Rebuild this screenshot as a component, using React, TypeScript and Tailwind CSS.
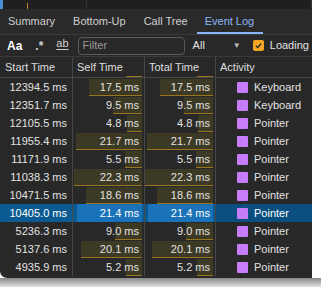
import React from 'react';

type Row = { start: string; self: number; total: number; activity: string; selected?: boolean };

const rows: Row[] = [
  { start: '12394.5', self: 17.5, total: 17.5, activity: 'Keyboard' },
  { start: '12351.7', self: 9.5, total: 9.5, activity: 'Keyboard' },
  { start: '12105.5', self: 4.8, total: 4.8, activity: 'Pointer' },
  { start: '11955.4', self: 21.7, total: 21.7, activity: 'Pointer' },
  { start: '11171.9', self: 5.5, total: 5.5, activity: 'Pointer' },
  { start: '11038.3', self: 22.3, total: 22.3, activity: 'Pointer' },
  { start: '10471.5', self: 18.6, total: 18.6, activity: 'Pointer' },
  { start: '10405.0', self: 21.4, total: 21.4, activity: 'Pointer', selected: true },
  { start: '5236.3', self: 9.0, total: 9.0, activity: 'Pointer' },
  { start: '5137.6', self: 20.1, total: 20.1, activity: 'Pointer' },
  { start: '4935.9', self: 5.2, total: 5.2, activity: 'Pointer' },
];

const PX_PER_MS = 3.03;

const BarCell: React.FC<{ value: number; selected?: boolean }> = ({ value, selected }) => (
  <div className="relative flex items-center justify-end pr-[5px] border-r border-[#474747]">
    <div
      className={
        selected
          ? 'absolute right-[2px] top-0 bottom-0 bg-[#1a72b8]'
          : 'absolute right-[2px] top-[1px] bottom-0 bg-[#3c3925] border-b border-[#9b7420]'
      }
      style={{ width: `${value * PX_PER_MS}px` }}
    />
    <span className="relative">{value.toFixed(1)} ms</span>
  </div>
);

export default function App() {
  return (
    <div className="w-[321px] h-[287px] bg-white overflow-hidden" style={{ fontFamily: '"Liberation Sans", Arial, sans-serif' }}>
      <div className="w-[312px] h-[278px] bg-[#282828] rounded-bl-[7px] overflow-hidden flex flex-col text-[11px] text-[#e2e2e2]">
        {/* timeline strip */}
        <div className="relative h-[9px] bg-[#1f1f1f] flex">
          <div className="w-[3px] bg-[#4a8fd8]" />
          <div className="w-[4px]" />
          <div className="w-[80px] border-r border-[#333]" />
          <div className="flex-1 border-r border-[#333]" />
          <div className="absolute left-[27px] top-[3px] w-[1px] h-[6px] bg-[#d08a1c]" />
        </div>

        {/* tabs */}
        <div className="h-[26px] flex items-stretch bg-[#2a2a2a] border-b border-[#3a3a3a] text-[#cfcfcf]">
          <div className="px-[8px] flex items-center">Summary</div>
          <div className="pl-[10px] pr-[9px] flex items-center">Bottom-Up</div>
          <div className="px-[9px] flex items-center">Call Tree</div>
          <div className="pl-[8px] pr-[9px] flex items-center text-[#8ab4f8] border-b-2 border-[#8ab4f8] pt-[2px]">Event Log</div>
        </div>

        {/* toolbar */}
        <div className="h-[22px] flex items-center border-b border-[#3a3a3a] bg-[#282828]">
          <span className="ml-[7px] font-bold text-[12px] text-white">Aa</span>
          <span className="ml-[13px] font-bold text-[12px] text-[#d0d0d0] leading-none">.*</span>
          <span className="ml-[13px] relative text-[11px] text-[#d0d0d0] leading-none">
            <span className="relative -top-[2px] underline decoration-1 underline-offset-2">ab</span>
          </span>
          <div className="ml-[9px] w-[107px] h-[18px] rounded-[4px] border border-[#5a5a5a] flex items-center pl-[4px] text-[#9a9a9a]">
            Filter
          </div>
          <span className="ml-[8px] text-[#e2e2e2]">All</span>
          <span className="ml-[28px] text-[8px] text-[#bdbdbd]">▼</span>
          <span className="ml-[12px] w-[11px] h-[11px] rounded-[2px] bg-[#f5a623] flex items-center justify-center">
            <svg width="9" height="9" viewBox="0 0 10 10">
              <path d="M2 5.2 L4.2 7.3 L8 2.8" fill="none" stroke="#2a2a2a" strokeWidth="1.6" />
            </svg>
          </span>
          <span className="ml-[6px] whitespace-nowrap">Loading</span>
        </div>

        {/* header */}
        <div className="grid grid-cols-[73px_72px_71px_1fr] h-[21px] border-b border-[#474747] text-[#dedede]">
          <div className="flex items-center pl-[5px] border-r border-[#474747]">Start Time</div>
          <div className="relative flex items-center pl-[4px] border-r border-[#474747]">
            Self Time
            <div className="absolute right-[2px] bottom-0 w-[16px] h-[1px] bg-[#9b7420]" />
          </div>
          <div className="relative flex items-center pl-[4px] border-r border-[#474747]">
            Total Time
            <div className="absolute right-[2px] bottom-0 w-[16px] h-[1px] bg-[#9b7420]" />
          </div>
          <div className="flex items-center pl-[4px]">Activity</div>
        </div>

        {/* rows */}
        {rows.map((r, i) => (
          <div
            key={i}
            className={`grid grid-cols-[73px_72px_71px_1fr] h-[18px] ${r.selected ? 'bg-[#0b5a92] text-white' : ''}`}
          >
            <div className="flex items-center justify-end pr-[5px] border-r border-[#474747]">{r.start} ms</div>
            <BarCell value={r.self} selected={r.selected} />
            <BarCell value={r.total} selected={r.selected} />
            <div className={`flex items-center pl-[21px] ${r.selected ? 'bg-[#0a4f80]' : ''}`}>
              <span className="w-[11px] h-[11px] rounded-[1px] bg-[#c77dfa] mr-[6px]" />
              {r.activity}
            </div>
          </div>
        ))}
      </div>
      <div className="h-[9px] bg-gradient-to-b from-[#8a8a8a] to-[#e0e0e0]" />
    </div>
  );
}
